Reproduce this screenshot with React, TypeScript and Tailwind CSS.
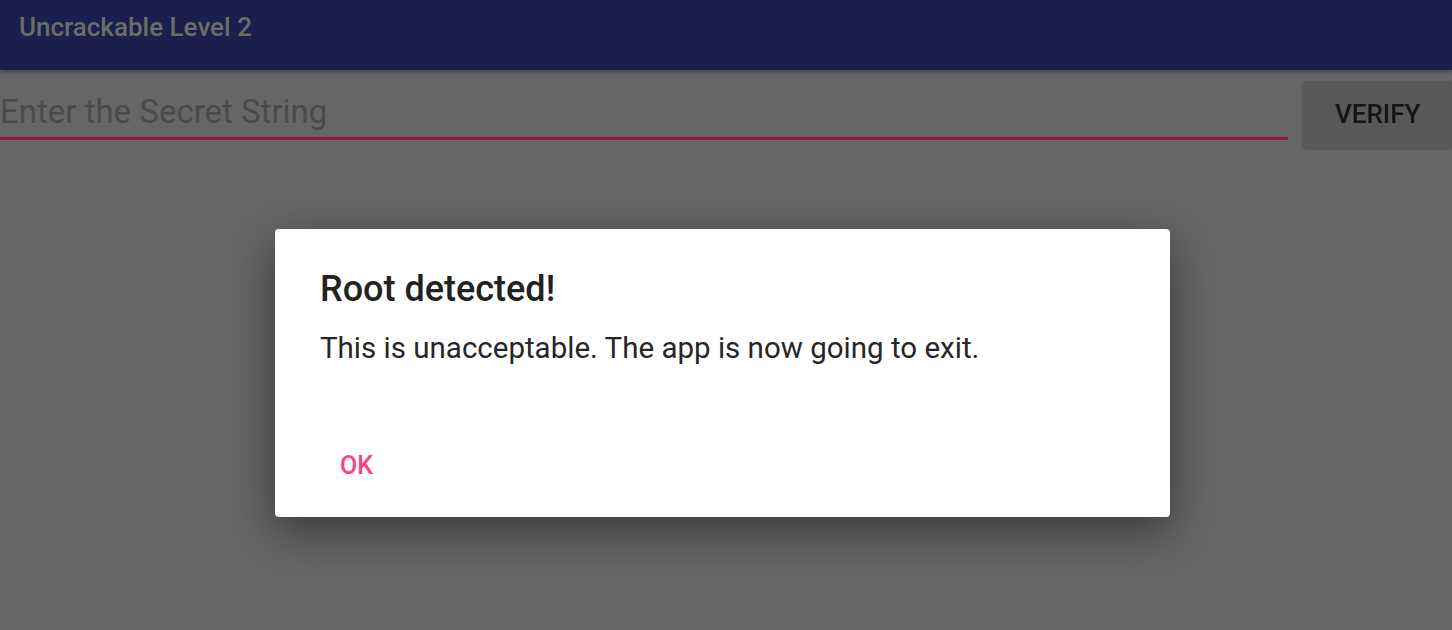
import React from "react";

const font = { fontFamily: "Roboto, 'Noto Sans', sans-serif" };

function AppBar() {
  return (
    <div className="relative z-10 flex h-[70px] items-start bg-[#1a1f4b] px-[19px] pt-[14px] shadow-[0_2px_4px_rgba(0,0,0,0.35)]">
      <h1 className="text-[26px] leading-[26px] font-medium text-[#6c6c6c]">
        Uncrackable Level 2
      </h1>
    </div>
  );
}

function SecretRow() {
  return (
    <div className="flex items-start">
      <div className="min-w-0 flex-1 border-b-[3px] border-[#8a1c45] pt-[22px] pb-[5px]">
        <div className="text-[33px] leading-[40px] whitespace-nowrap text-[#4a4a4a]">
          Enter the Secret String
        </div>
      </div>
      <button
        type="button"
        className="mt-[11px] ml-[15px] h-[67px] w-[149px] shrink-0 rounded-[4px] bg-[#585858] text-left text-[26px] font-medium text-[#141414] shadow-[0_1px_3px_rgba(0,0,0,0.25)]"
      >
        <span className="pl-[32px]">VERIFY</span>
      </button>
    </div>
  );
}

function RootDialog() {
  return (
    <div className="w-[895px] rounded-[4px] bg-white px-[45px] pt-[40px] pb-[35px] shadow-[0_14px_45px_rgba(0,0,0,0.45)]">
      <h2 className="text-[36px] leading-[40px] font-medium text-[#222222]">
        Root detected!
      </h2>
      <p className="mt-[21px] text-[29.5px] leading-[36px] text-[#262626]">
        This is unacceptable. The app is now going to exit.
      </p>
      <div className="mt-[84px] flex">
        <button
          type="button"
          className="px-[20px] text-[25px] leading-[32px] font-medium text-[#ff4081]"
        >
          OK
        </button>
      </div>
    </div>
  );
}

export default function App() {
  return (
    <div
      className="flex h-[630px] w-[1452px] flex-col overflow-hidden bg-[#666666]"
      style={font}
    >
      <AppBar />
      <SecretRow />
      <div className="flex pt-[81px] pl-[275px]">
        <RootDialog />
      </div>
    </div>
  );
}
